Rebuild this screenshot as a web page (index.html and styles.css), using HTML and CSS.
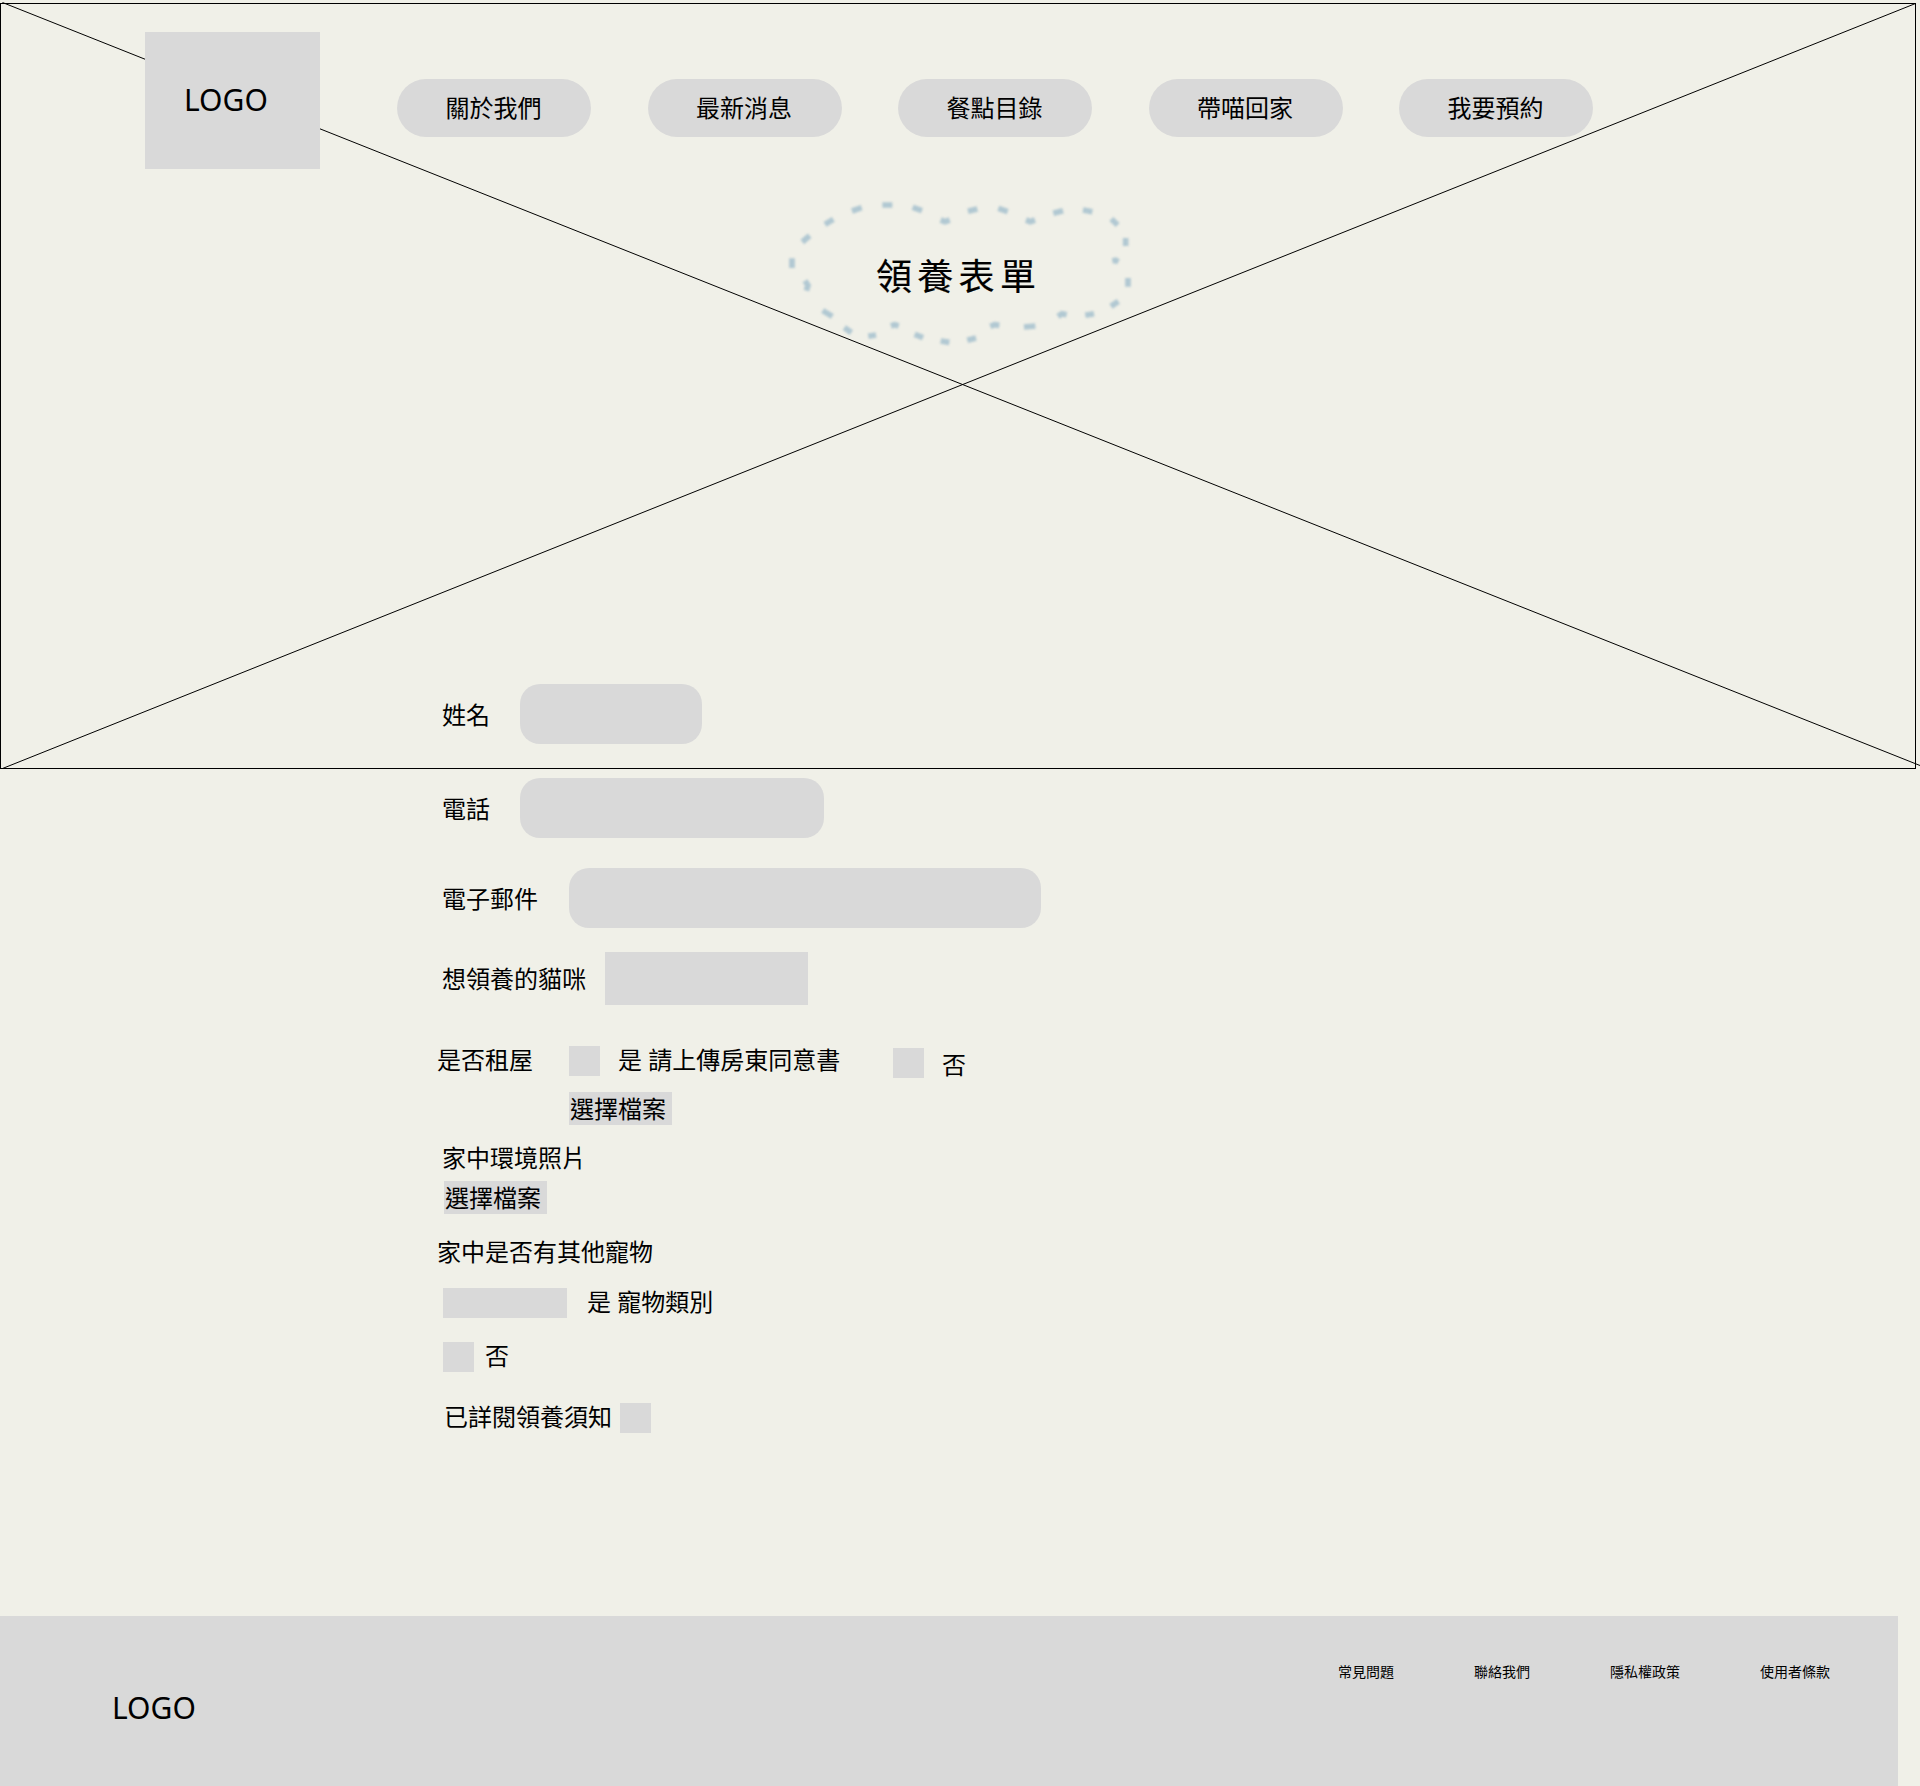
FILE: index.html
```html
<!DOCTYPE html>
<html lang="zh-Hant">
<head>
<meta charset="utf-8">
<title>領養表單</title>
<link rel="stylesheet" href="styles.css">
</head>
<body>
<div class="page">
  <svg class="banner" width="1920" height="770" viewBox="0 0 1920 770" fill="none" stroke="#000" aria-hidden="true">
    <rect x="0.5" y="3.5" width="1915" height="765"/>
    <path d="M2.500 2.500L1920 765.500M2.500 768.500L1915.500 3.500"/>
  </svg>

  <header class="header">
    <a class="logo">LOGO</a>
    <nav class="nav">
      <a class="pill">關於我們</a>
      <a class="pill">最新消息</a>
      <a class="pill">餐點目錄</a>
      <a class="pill">帶喵回家</a>
      <a class="pill">我要預約</a>
    </nav>
  </header>

  <div class="title">
    <svg class="cloud" width="380" height="170" viewBox="0 0 1140 510" fill="none" aria-hidden="true">
      <g class="dashes">
        <path d="M337 45H367M428 52L456 62M246 63L275 53M165 103L190 88M97 156L119 137M66 205V234M594 64L622 57M685 55L713 65M850 70L879 62M939 60L967 65M1024 87L1043 105M1067 144V168M1074 264V290M1023 349L1045 334M946 376L972 371M762 411L796 408M592 451L618 444M512 453L538 457M434 433L459 443M295 439L318 435M223 413L244 428M158 362L187 379"/>
        <path d="M512 90L525 95L539 90M768 90L781 95L795 90M1027 213L1037 211L1045 216M105 272L114 286L109 302M363 408L374 404L386 408M661 409L674 404L688 406M864 379L876 371L890 374"/>
      </g>
    </svg>
    <h1 class="title-text">領養表單</h1>
  </div>

  <form class="form">
    <div class="row row-name"><label>姓名</label><span class="field field-name"></span></div>
    <div class="row row-phone"><label>電話</label><span class="field field-phone"></span></div>
    <div class="row row-mail"><label>電子郵件</label><span class="field field-mail"></span></div>
    <div class="row row-cat"><label>想領養的貓咪</label><span class="select"></span></div>
    <div class="row row-rent">
      <label class="rent-label">是否租屋</label>
      <div class="rent-yes">
        <div class="choice"><span class="check"></span><label class="choice-text">是 請上傳房東同意書</label></div>
        <span class="file">選擇檔案</span>
      </div>
      <div class="rent-no"><span class="check"></span><label class="no-text">否</label></div>
    </div>
    <div class="photos"><label>家中環境照片</label><span class="file file-photos">選擇檔案</span></div>
    <label class="pets-label">家中是否有其他寵物</label>
    <div class="row row-pets"><span class="kind"></span><label>是 寵物類別</label></div>
    <div class="row row-none"><span class="check"></span><label>否</label></div>
    <div class="row row-agree"><label>已詳閱領養須知</label><span class="check"></span></div>
  </form>

  <footer class="footer">
    <a class="footer-logo">LOGO</a>
    <nav class="links"><a>常見問題</a><a>聯絡我們</a><a>隱私權政策</a><a>使用者條款</a></nav>
  </footer>
</div>
</body>
</html>
```
FILE: styles.css
```css
* { box-sizing: border-box; }

body {
  margin: 0;
  background: #f0f0e8;
  color: #000;
  font: 24px/30px "Noto Sans", "Noto Sans CJK TC", sans-serif;
}

.page {
  position: relative;
  display: flex;
  flex-direction: column;
  width: 1920px;
  height: 1786px;
  overflow: hidden;
}

.banner {
  position: absolute;
  top: 0;
  left: 0;
}

.header, .title, .form, .footer { position: relative; }

.header {
  display: flex;
  padding: 32px 0 0 145px;
}

.logo {
  width: 175px;
  height: 137px;
  padding: 48px 0 0 39px;
  background: #d9d9d9;
  font-size: 30px;
  line-height: 40px;
}

.nav {
  display: flex;
  gap: 56.5px;
  margin: 47px 0 0 77px;
}

.pill {
  display: flex;
  justify-content: center;
  width: 194px;
  height: 58px;
  padding: 14px 1px 0 0;
  border-radius: 29px;
  background: #d9d9d9;
}

.title {
  display: grid;
  width: 380px;
  height: 170px;
  margin: 21px 0 0 770px;
}

.cloud, .title-text { grid-area: 1 / 1; }

.dashes {
  stroke: #b1c8d2;
  stroke-width: 17;
  filter: blur(3.5px);
}

.title-text {
  margin: 62px 0 0 106px;
  font-size: 36px;
  line-height: 50px;
  font-weight: 400;
  letter-spacing: 5.3px;
  -webkit-text-stroke: 0.2px #000;
}

.form {
  display: flex;
  flex-direction: column;
  margin: 324px 0 0 437px;
}

label {
  height: 30px;
  line-height: 32px;
  white-space: pre;
}

.row {
  display: flex;
  align-items: center;
}

.row-name, .row-phone { gap: 30px; padding-left: 5px; }
.row-phone { margin-top: 34px; }
.row-mail { gap: 31px; margin-top: 30px; padding-left: 5px; }
.row-cat { gap: 19px; margin-top: 24px; padding-left: 5px; }
.row-cat label { line-height: 30px; }

.field {
  height: 60px;
  border-radius: 20px;
  background: #d9d9d9;
}

.field-name { width: 182px; }
.field-phone { width: 304px; }
.field-mail { width: 472px; }

.select {
  width: 203px;
  height: 53px;
  background: #d9d9d9;
}

.check {
  flex: none;
  width: 31px;
  height: 30px;
  background: #d9d9d9;
}

.row-rent {
  align-items: flex-start;
  margin-top: 39px;
}

.rent-label { width: 132px; }
.rent-yes { width: 324px; padding-top: 2px; }
.choice { display: flex; gap: 18px; }
.choice-text { margin-top: -2px; }

.rent-no {
  display: flex;
  gap: 18px;
  padding-top: 4px;
}

.no-text { margin-top: 1px; }

.file {
  display: block;
  width: 103px;
  height: 33px;
  margin-top: 16px;
  padding: 2px 0 0 1px;
  background: #d9d9d9;
}

.photos {
  display: flex;
  flex-direction: column;
  margin-top: 17px;
  padding-left: 5px;
}

.file-photos { margin: 9px 0 0 2px; }
.pets-label { margin-top: 22px; }
.row-pets { gap: 20px; margin-top: 22px; padding-left: 6px; align-items: flex-start; }
.row-pets label { margin-top: -2px; }

.kind {
  width: 124px;
  height: 30px;
  background: #d9d9d9;
}

.row-none { gap: 11px; margin-top: 24px; padding-left: 6px; align-items: flex-start; }
.row-none label { margin-top: -2px; }
.row-agree { gap: 8px; margin-top: 31px; padding-left: 7px; align-items: flex-start; }
.row-agree label { margin-top: -2px; }

.footer {
  display: flex;
  justify-content: space-between;
  width: 1898px;
  height: 170px;
  margin-top: auto;
  padding: 0 68px 0 112px;
  background: #d9d9d9;
}

.footer-logo {
  margin-top: 72px;
  font-size: 30px;
  line-height: 40px;
}

.links {
  display: flex;
  gap: 80px;
  margin-top: 46px;
  font-size: 14px;
  line-height: 20px;
}
```
